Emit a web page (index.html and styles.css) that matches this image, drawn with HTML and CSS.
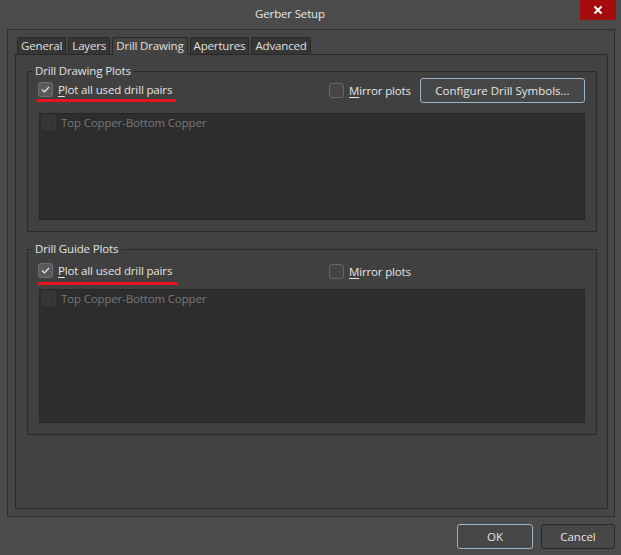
FILE: index.html
```html
<!DOCTYPE html>
<html lang="en">
<head>
    <meta charset="UTF-8">
    <title>Gerber Setup</title>
    <link rel="stylesheet" href="styles.css">
</head>
<body>
    <div class="window">
        <div class="titlebar">
            <div class="title">Gerber Setup</div>
            <div class="close-btn">
                <svg width="10" height="10" viewBox="0 0 10 10">
                    <path d="M1.5 1.5 L8.5 8.5 M8.5 1.5 L1.5 8.5" stroke="#fff" stroke-width="2" fill="none"/>
                </svg>
            </div>
        </div>

        <div class="panel">
            <div class="tabs">
                <div class="tab">General</div>
                <div class="tab">Layers</div>
                <div class="tab active">Drill Drawing</div>
                <div class="tab">Apertures</div>
                <div class="tab">Advanced</div>
            </div>

            <div class="tab-page">
                <fieldset class="group">
                    <legend>Drill Drawing Plots</legend>
                    <div class="row">
                        <div class="col-first">
                            <label class="check">
                                <span class="box checked">
                                    <svg width="13" height="13" viewBox="0 0 13 13"><path d="M3 6.5 L5.5 9 L10 4" stroke="#e8e8e8" stroke-width="1.2" fill="none"/></svg>
                                </span>
                                <span><u>P</u>lot all used drill pairs</span>
                                <span class="marker"></span>
                            </label>
                        </div>
                        <label class="check">
                            <span class="box"></span>
                            <span><u>M</u>irror plots</span>
                        </label>
                        <button class="btn default btn-configure">Configure Drill Symbols...</button>
                    </div>
                    <div class="listbox">
                        <div class="list-item">
                            <span class="box disabled"></span>
                            <span>Top Copper-Bottom Copper</span>
                        </div>
                    </div>
                </fieldset>

                <fieldset class="group group-guide">
                    <legend>Drill Guide Plots</legend>
                    <div class="row">
                        <div class="col-first">
                            <label class="check">
                                <span class="box checked">
                                    <svg width="13" height="13" viewBox="0 0 13 13"><path d="M3 6.5 L5.5 9 L10 4" stroke="#e8e8e8" stroke-width="1.2" fill="none"/></svg>
                                </span>
                                <span><u>P</u>lot all used drill pairs</span>
                                <span class="marker"></span>
                            </label>
                        </div>
                        <label class="check">
                            <span class="box"></span>
                            <span><u>M</u>irror plots</span>
                        </label>
                    </div>
                    <div class="listbox">
                        <div class="list-item">
                            <span class="box disabled"></span>
                            <span>Top Copper-Bottom Copper</span>
                        </div>
                    </div>
                </fieldset>
            </div>
        </div>

        <div class="footer">
            <button class="btn default btn-ok">OK</button>
            <button class="btn btn-cancel">Cancel</button>
        </div>
    </div>
</body>
</html>
```

FILE: styles.css
```css
* {
    box-sizing: border-box;
}
body {
    margin: 0;
    background-color: #4b4b4b;
    font-family: "Open Sans", "Noto Sans", sans-serif;
    font-size: 11.5px;
    letter-spacing: -0.15px;
    color: #e4e4e4;
}
.window {
    width: 621px;
    height: 555px;
    display: flex;
    flex-direction: column;
}
.titlebar {
    height: 29px;
    display: flex;
    align-items: flex-start;
    flex-shrink: 0;
}
.title {
    flex: 1;
    text-align: center;
    line-height: 27px;
    color: #e8e8e8;
}
.close-btn {
    width: 36px;
    height: 20px;
    margin-right: 5px;
    background-color: #a50d0d;
    display: flex;
    align-items: center;
    justify-content: center;
}
.panel {
    height: 488px;
    margin: 0 6px 0 7px;
    padding: 7px 6px 7px 7px;
    border: 1px solid #2c2c2c;
    background-color: #464646;
    display: flex;
    flex-direction: column;
    flex-shrink: 0;
}
.tabs {
    display: flex;
    gap: 2px;
    padding-left: 2px;
    height: 17px;
}
.tab {
    height: 17px;
    padding: 0 3px;
    line-height: 16px;
    border: 1px solid #2a2a2a;
    border-bottom: none;
    border-radius: 2px 2px 0 0;
    background-color: #363636;
    color: #e0e0e0;
}
.tab.active {
    position: relative;
    z-index: 1;
    height: 18px;
    background-color: #434343;
}
.tab-page {
    flex: 1;
    padding: 9px 10px 0 11px;
    border: 1px solid #2a2a2a;
    background-color: #424242;
}
.group {
    margin: 0;
    padding: 0 11px 11px 11px;
    border: 1px solid #2a2a2a;
    background-color: #404040;
}
.group legend {
    margin-left: -7px;
    padding: 0 3px;
    line-height: 14px;
    color: #e0e0e0;
}
.group-guide {
    margin-top: 10px;
}
.row {
    display: flex;
    align-items: center;
    height: 24px;
    margin: 0 0 0 -1px;
}
.group-guide .row {
    margin-top: 3px;
}
.col-first {
    flex: 0 0 291px;
}
.check {
    position: relative;
    display: inline-flex;
    align-items: center;
    gap: 5px;
    color: #e4e4e4;
}
.check u {
    text-underline-offset: 2px;
}
.box {
    width: 15px;
    height: 15px;
    border: 1px solid #676767;
    border-radius: 3px;
    background-color: #454545;
    display: flex;
    align-items: center;
    justify-content: center;
    flex-shrink: 0;
}
.box.checked {
    background-color: #5a5a5a;
    border-color: #6e6e6e;
}
.box.disabled {
    background-color: #353535;
    border-color: #3a3a3a;
}
.marker {
    position: absolute;
    left: -2px;
    right: -4px;
    top: 17px;
    height: 3px;
    border-radius: 2px;
    background-color: #e3161d;
}
.group-guide .marker {
    top: 19px;
    left: -1px;
    right: -6px;
}
.btn {
    height: 25px;
    padding: 0;
    border: 1px solid #272727;
    border-radius: 3px;
    background-color: #474747;
    color: #e6e6e6;
    font: inherit;
}
.btn.default {
    border-color: #9cb3ca;
}
.btn-configure {
    width: 165px;
    margin-left: auto;
}
.listbox {
    margin-top: 11px;
    height: 107px;
    padding: 1px 1px;
    border: 1px solid #262626;
    background-color: #2d2d2d;
}
.group-guide .listbox {
    margin-top: 6px;
    height: 134px;
}
.list-item {
    display: flex;
    align-items: center;
    gap: 5px;
    color: #777;
}
.footer {
    display: flex;
    justify-content: flex-end;
    gap: 8px;
    padding: 7px 6px 0 0;
}
.btn-ok {
    width: 76px;
}
.btn-cancel {
    width: 74px;
}
```
